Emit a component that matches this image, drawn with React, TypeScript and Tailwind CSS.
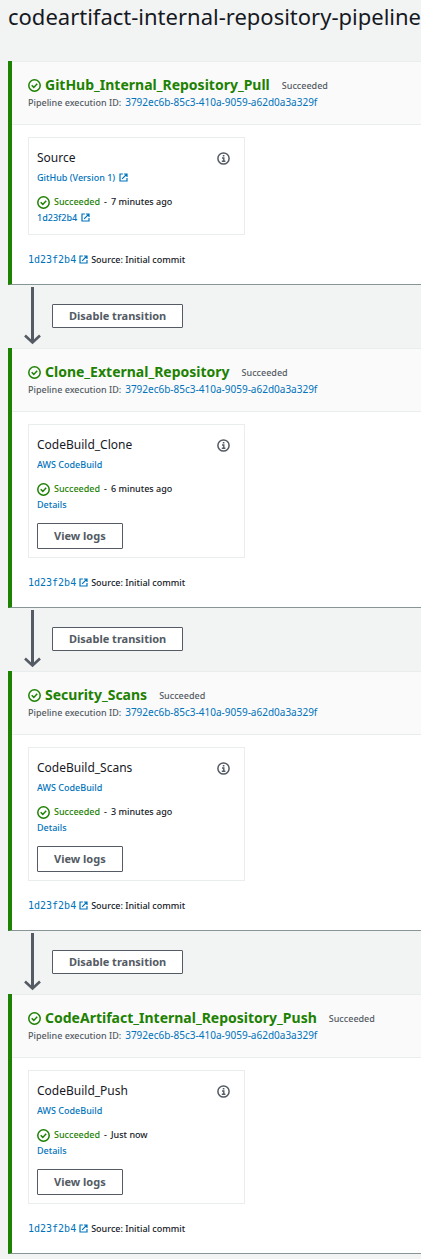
type Stage = {
  name: string;
  action: string;
  provider: string;
  externalProvider?: boolean;
  when: string;
  revision?: string;
};

const EXECUTION_ID = "3792ec6b-85c3-410a-9059-a62d0a3a329f";
const COMMIT = "1d23f2b4";

const stages: Stage[] = [
  {
    name: "GitHub_Internal_Repository_Pull",
    action: "Source",
    provider: "GitHub (Version 1)",
    externalProvider: true,
    when: "7 minutes ago",
    revision: COMMIT,
  },
  { name: "Clone_External_Repository", action: "CodeBuild_Clone", provider: "AWS CodeBuild", when: "6 minutes ago" },
  { name: "Security_Scans", action: "CodeBuild_Scans", provider: "AWS CodeBuild", when: "3 minutes ago" },
  {
    name: "CodeArtifact_Internal_Repository_Push",
    action: "CodeBuild_Push",
    provider: "AWS CodeBuild",
    when: "Just now",
  },
];

function SuccessIcon() {
  return (
    <svg className="size-[13px] shrink-0 text-[#1d8102]" viewBox="0 0 13 13" fill="none" stroke="currentColor" strokeWidth="1.5" aria-hidden="true">
      <circle cx="6.5" cy="6.5" r="5.7" />
      <path d="M3.7 6.3l2.1 2.1 3.4-3.6" />
    </svg>
  );
}

function InfoIcon() {
  return (
    <svg className="size-[13px]" viewBox="0 0 13 13" fill="none" stroke="currentColor" aria-hidden="true">
      <circle cx="6.5" cy="6.5" r="5.6" strokeWidth="1.5" />
      <path d="M5.8 3.8h1.6M5 6h1.8v3.2M4.8 9.3h3.6" strokeWidth="1.4" />
    </svg>
  );
}

function ExternalIcon() {
  return (
    <svg className="mb-px size-[9px] shrink-0" viewBox="0 0 9 9" fill="none" stroke="currentColor" strokeWidth="1.2" aria-hidden="true">
      <path d="M3.9 1H1v7h7V5.1M4.9 1H8v3.1M8 1L3.1 5.9" />
    </svg>
  );
}

function Arrow() {
  return (
    <svg className="h-[58px] w-[17px] shrink-0 text-[#545b64]" viewBox="0 0 17 58" fill="none" stroke="currentColor" strokeWidth="3" aria-hidden="true">
      <path d="M8.5 0v56" />
      <path d="M1 48.5l7.5 7 7.5-7" strokeWidth="2.6" />
    </svg>
  );
}

function Transition() {
  return (
    <div className="flex h-[63px] items-center gap-[11px] pb-px pl-4">
      <Arrow />
      <button
        type="button"
        className="h-6 rounded-[1px] border border-[#545b64] bg-white px-4 text-[11px] leading-4 font-bold whitespace-nowrap text-[#545b64]"
      >
        Disable transition
      </button>
    </div>
  );
}

function StageCard({ stage }: { stage: Stage }) {
  return (
    <section className="border-b border-l-4 border-b-[#879596] border-l-[#1d8102] bg-white">
      <header className="border-y border-[#eaeded] bg-[#fafafa] px-4 pt-[13px] pb-[14px]">
        <div className="flex items-center gap-1">
          <SuccessIcon />
          <h2 className="text-[14px] leading-5 font-bold whitespace-nowrap text-[#1d8102]">{stage.name}</h2>
          <span className="ml-2 pt-px text-[9px] leading-[19px] font-medium text-[#545b64]">Succeeded</span>
        </div>
        <p className="flex gap-1 text-[9px] leading-[15px] font-medium whitespace-nowrap text-[#545b64]">
          Pipeline execution ID:
          <a href="#execution" className="text-[10px] font-normal text-[#0073bb]">
            {EXECUTION_ID}
          </a>
        </p>
      </header>
      <div className="px-4 pt-3 pb-4">
        <article className="w-[217px] border border-[#eaeded] px-2 pt-3 pb-2">
          <div className="flex items-center justify-between pr-[6px]">
            <h3 className="text-[12px] leading-4 text-[#16191f]">{stage.action}</h3>
            <button type="button" aria-label="Action information" className="text-[#545b64]">
              <InfoIcon />
            </button>
          </div>
          <a href="#provider" className="mt-1 flex items-center gap-1 text-[9px] leading-4 font-medium text-[#0073bb]">
            {stage.provider}
            {stage.externalProvider && <ExternalIcon />}
          </a>
          <p className="mt-2 flex items-center gap-1 text-[9px] leading-4 font-medium text-[#16191f]">
            <SuccessIcon />
            <span className="text-[#1d8102]">Succeeded</span>
            <span>-</span>
            <span>{stage.when}</span>
          </p>
          <a href="#details" className="flex items-center gap-1 text-[9px] leading-4 font-medium text-[#0073bb]">
            {stage.revision ?? "Details"}
            {stage.revision && <ExternalIcon />}
          </a>
          {!stage.revision && (
            <button
              type="button"
              className="mt-[10px] block h-[26px] rounded-[1px] border border-[#545b64] bg-white px-4 text-[11px] leading-4 font-bold text-[#545b64]"
            >
              View logs
            </button>
          )}
        </article>
        <p className="mt-[17px] flex items-center gap-[3px] text-[9px] leading-4 font-medium text-[#16191f]">
          <a href="#commit" className="flex items-center gap-[3px] font-['DejaVu_Sans_Mono',monospace] text-[10px] font-normal text-[#0073bb]">
            {COMMIT}
            <ExternalIcon />
          </a>
          Source: Initial commit
        </p>
      </div>
    </section>
  );
}

export default function App() {
  return (
    <main className="min-h-screen overflow-x-hidden bg-[#f2f3f3] pb-1 pl-2 font-['Noto_Sans',sans-serif]">
      <h1 className="pb-[29px] text-[22px] leading-8 whitespace-nowrap text-[#16191f]">
        codeartifact-internal-repository-pipeline
      </h1>
      {stages.map((stage, index) => (
        <div key={stage.name}>
          {index > 0 && <Transition />}
          <StageCard stage={stage} />
        </div>
      ))}
    </main>
  );
}
